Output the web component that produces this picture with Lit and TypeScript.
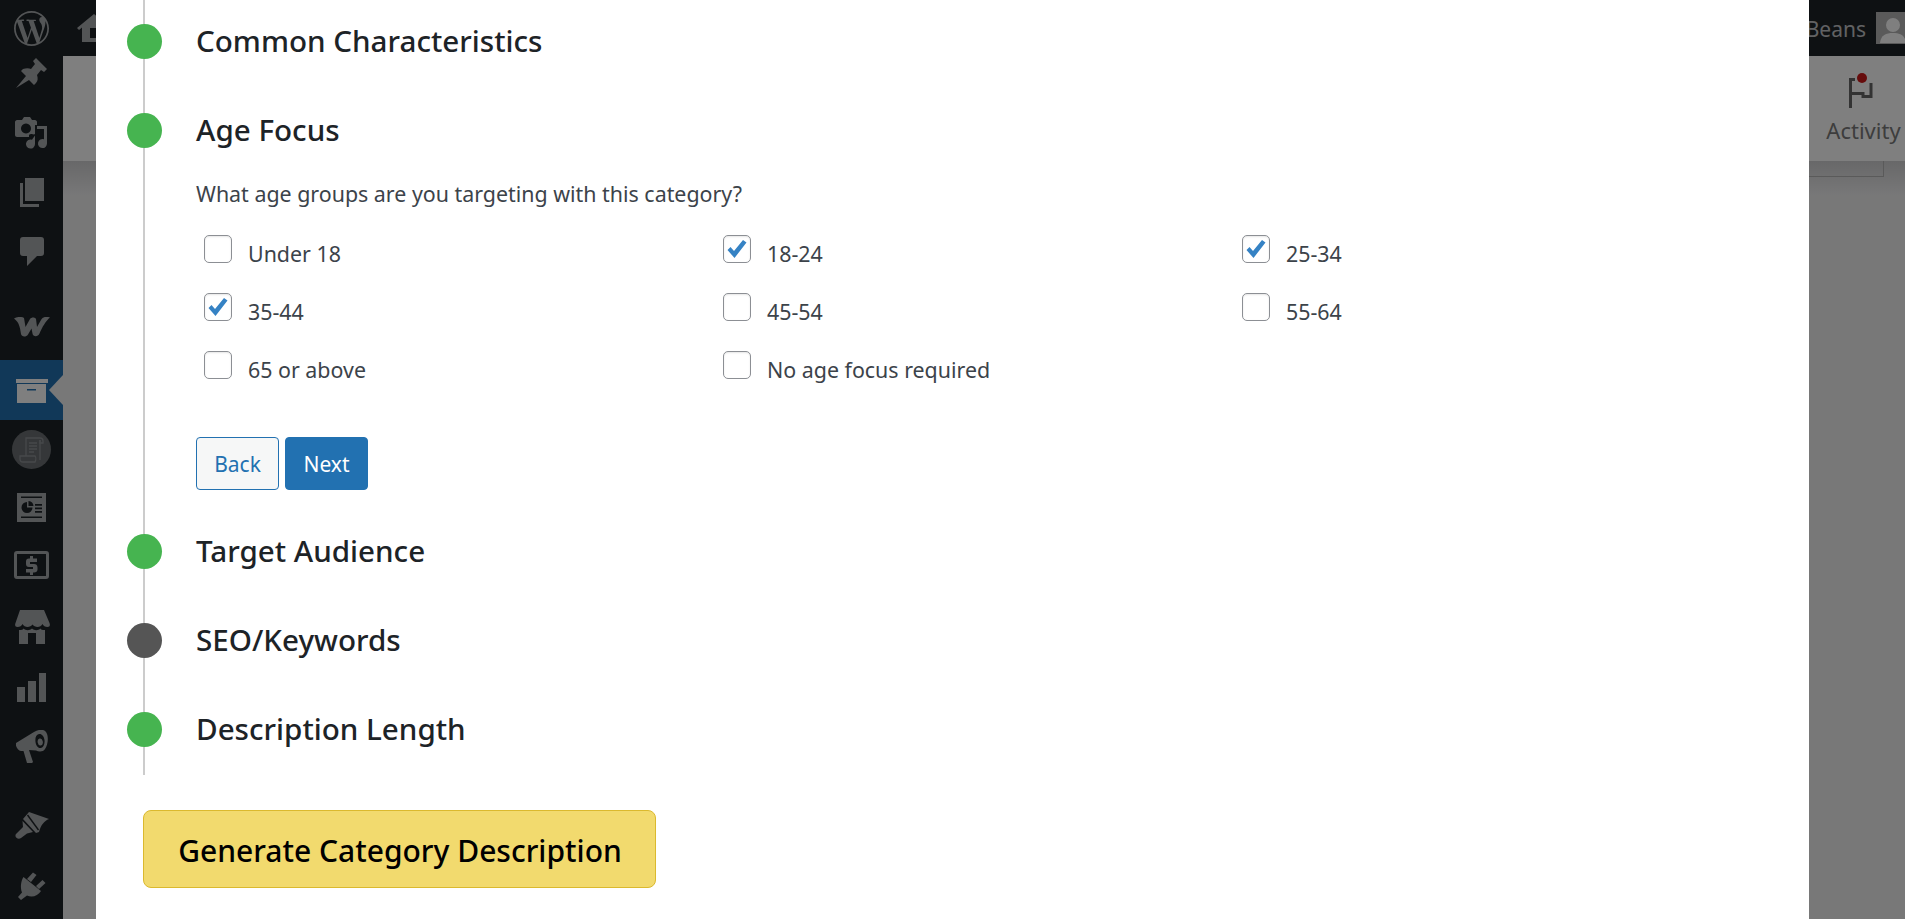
import { LitElement, html, css, svg } from "lit";
import { customElement } from "lit/decorators.js";

const side = (y: number, h: number, body: unknown, cls = "") => html`<div class="side-item ${cls}" style="height:${h}px;padding-top:${y}px">${body}</div>`;

const wp = svg`<path d="M21.469 6.825c.84 1.537 1.318 3.3 1.318 5.175 0 3.979-2.156 7.456-5.363 9.325l3.295-9.527c.615-1.54.82-2.771.82-3.864 0-.405-.026-.78-.07-1.11m-7.981.105c.647-.03 1.232-.105 1.232-.105.582-.075.514-.93-.067-.899 0 0-1.755.135-2.88.135-1.064 0-2.85-.15-2.85-.15-.585-.03-.661.855-.075.885 0 0 .54.061 1.125.09l1.68 4.605-2.37 7.08L5.354 6.9c.649-.03 1.234-.1 1.234-.1.585-.075.516-.93-.065-.896 0 0-1.746.138-2.874.138-.2 0-.438-.008-.69-.015C4.911 3.15 8.235 1.215 12 1.215c2.809 0 5.365 1.072 7.286 2.833-.046-.003-.091-.009-.141-.009-1.06 0-1.812.923-1.812 1.914 0 .89.513 1.643 1.06 2.531.411.72.89 1.643.89 2.977 0 .915-.354 1.994-.821 3.479l-1.075 3.585-3.9-11.61.001.014zM12 22.784c-1.059 0-2.081-.153-3.048-.437l3.237-9.406 3.315 9.087c.024.053.05.101.078.149-1.12.393-2.325.609-3.582.609M1.211 12c0-1.564.336-3.05.935-4.39L7.29 21.709C3.694 19.96 1.212 16.271 1.211 12M12 0C5.385 0 0 5.385 0 12s5.385 12 12 12 12-5.385 12-12S18.615 0 12 0"/>`;

const ico = (w: number, h: number, vb: string, body: unknown) => html`<svg class="ico" width=${w} height=${h} viewBox=${vb}>${body}</svg>`;
const DARK = "#1d2327";

const icons = {
  wp: ico(35, 35, "0 0 24 24", wp),
  pin: ico(31, 30, "0 0 31 30", svg`<path d="M0 30L10 18 5 13l2-2c3-1 6-1 8 0l4-5-2-3 3-3 11 11-3 3-3-2-4 5c1 3 1 6-1 8l-2 2-5-5z"/>`),
  media: ico(33, 32, "0 0 33 32", svg`<path fill-rule="evenodd" d="M2 3h5l2-3h6l2 3h3c1 0 2 1 2 2v3h-2v9l-1 .5c-2-1-4-.5-5 .5v2H2c-1 0-2-1-2-2V5c0-1 1-2 2-2zm9 3.500a5 5 0 1 0 .01 0z"/><path d="M22 9h10v17.500a4.500 4.500 0 1 1-3-4.200V12h-7z"/><path d="M20 18.500V27a4.500 4.500 0 1 1-3-4.200z"/>`),
  pages: ico(24, 29, "0 0 24 29", svg`<path d="M5 0h19v23H5z"/><path d="M0 5h3v21h16v3H0z"/>`),
  comments: ico(24, 29, "0 0 24 29", svg`<path d="M3 0h18c2 0 3 1 3 3v13c0 2-1 3-3 3h-4L7 29V19H3c-2 0-3-1-3-3V3c0-2 1-3 3-3z"/>`),
  woo: ico(36, 20, "0 0 36 20", svg`<path d="M0 1.500C3-.5 8-.5 10 1l1.500 9 4.500-8c1.500-2 5-2 6 0l1 8 4-7c1.500-3 5-4 9-2.500-4 3-8 10-10.500 16-1.500 3.500-6.500 3.500-7 0l-1-5-3.500 6c-2 3-6.500 2.500-7-.5C6 10 5 5 0 1.500z"/>`),
  archive: ico(32, 24, "0 0 32 24", svg`<path fill-rule="evenodd" d="M0 0h32v4H0zM1 5h29v19H1zm10 5v1.500h9V10z"/>`),
  scroll: html`<div class="scroll-badge"><svg width="28" height="28" viewBox="0 0 28 28" fill="none" stroke="#8d9195" stroke-width="1.300"><path d="M8 20V2h14c2 0 3 1 3 3v2h-3V4"/><path d="M22 4v20"/><path d="M11 7h8M11 10h8M11 13h8M11 16h5"/><path d="M2 20h15c1 1 1 4 0 6H5c-2 0-3-1-3-3z"/></svg></div>`,
  dash: ico(29, 29, "0 0 29 29", svg`<rect width="29" height="29"/><path d="M4 3.500h21V5H4zM4 23.500h21V25H4zM18 11h7v1.800h-7zM18 14.500h7v1.800h-7zM18 18h7v1.800h-7z" fill=${DARK}/><path d="M10 9a5.500 5.500 0 1 0 5.500 5.500H10z" fill=${DARK}/><path d="M11.500 8a5.500 5.500 0 0 1 5 5h-5z" fill=${DARK}/>`),
  money: ico(35, 28, "0 0 35 28", svg`<path fill-rule="evenodd" d="M3 0h29c2 0 3 1 3 3v22c0 2-1 3-3 3H3c-2 0-3-1-3-3V3c0-2 1-3 3-3zm0 3v22h29V3z"/><path d="M16 5h3v2.500h4V11h-7v2h4c2 0 3.500 1 3.500 3.500v2c0 2-1.500 3-3.500 3h-1V24h-3v-2.500h-4V18h7v-2h-4c-2 0-3-1-3-3v-2.500c0-2 1-3 3-3h1z"/>`),
  store: ico(36, 34, "0 0 36 34", svg`<path d="M6 0h24l5.500 13c1 2.500 0 4-2 4-2.500 0-4-1-5-3-1 2-3 3-5 3s-4-1-5-2.500c-1 1.500-3 2.500-5 2.500s-4-1-5-3c-1 2-2.500 3-5 3-2 0-3-1.500-2-4z"/><path d="M5 20c3 0 4-.5 4.500-1.500 2 2 6 2.500 8.500 0 2.500 2.500 6.500 2 8.500 0 .5 1 1.500 1.500 4.500 1.500v14h-9V23h-8v11H5z"/>`),
  chart: ico(29, 29, "0 0 29 29", svg`<path d="M0 14h8v15H0zM11 8h8v21h-8zM22 0h7v29h-7z"/>`),
  mega: ico(32, 33, "0 0 32 33", svg`<path fill-rule="evenodd" d="M0 13L18 2c5-3 10-3 12 0 3 4 2 13-1 17-2 3-6 3-9 1.500L13 20l4 12-1 1h-5l-3.500-12L5 21C2 20.500-1 16 0 13zM23 4c-3 .5-4 4-3.500 8 .5 4 3 6.500 5.500 6 2.500-.5 4-4 3.500-8-.5-4-3-6.500-5.500-6zm.5 4.500a2.500 3.500-8 1 1 1.500 7 2.500 3.500-8 1 1-1.500-7z"/>`),
  brush: ico(34, 27, "0 0 34 27", svg`<path d="M14 0l20 7c-5 2-8 6-10 13l-3 1L8 7z"/><path d="M12.500 3L23.500 18" stroke=${DARK} stroke-width="1.400" fill="none"/><path d="M7.500 9L18 20l-6 1.500-6 4.500c-3 2-7-1-5-4l7-7z"/>`),
  plug: ico(28, 28, "0 0 28 28", svg`<path d="M9 7l6-6.500 3.500 2.500-5.500 7zM18 14l6.500-6 3 3-6.500 6z"/><path d="M5.500 5L23 19c-3 5-9 7-14 4.500L3 28l-3-3 4-4.500C2 15 3 9 5.500 5z"/>`),
  home: ico(34, 28, "0 0 34 28", svg`<path fill-rule="evenodd" d="M17 0l17 14-2 2-3-2.500V28H5V13.500L2 16l-2-2zM13 14v10h8V14z"/>`),
  flag: html`<svg width="34" height="36" viewBox="0 0 34 36"><path d="M3.500 35V6.500H8M3.500 20.500H16v3h8V10" fill="none" stroke="#666" stroke-width="3"/><circle cx="15" cy="5" r="5" fill="#cc1818"/></svg>`,
};

const ages: [string, boolean][] = [
  ["Under 18", false], ["18-24", true], ["25-34", true],
  ["35-44", true], ["45-54", false], ["55-64", false],
  ["65 or above", false], ["No age focus required", false],
];

@customElement("app-root")
export class AppRoot extends LitElement {
  static styles = css`
    :host { display: block; width: 1905px; height: 919px; overflow: hidden; position: relative; font-family: "Noto Sans", sans-serif; background: #f0f0f1; }
    .admin { display: grid; grid-template-columns: 63px 1fr; grid-template-rows: 56px 105px 1fr; height: 919px; }
    .sidebar { grid-row: 1 / 4; background: #1d2327; display: flex; flex-direction: column; }
    .side-item { display: flex; justify-content: center; align-items: flex-start; box-sizing: border-box; color: #a7aaad; position: relative; flex: none; }
    .side-item .ico { fill: currentColor; }
    .side-item.active { background: #2271b1; color: #fff; }
    .side-item.active::after { content: ""; position: absolute; right: 0; top: 15px; border: 15px solid transparent; border-left: 0; border-right: 14px solid #f0f0f1; }
    .scroll-badge { width: 39px; height: 39px; border-radius: 50%; background: #6b6f72; display: flex; align-items: center; justify-content: center; }
    .topbar { background: #1d2327; display: flex; align-items: center; justify-content: space-between; color: #c3c4c7; padding-left: 14px; }
    .topbar .ico { fill: #a7aaad; }
    .user { display: flex; align-items: center; gap: 10px; font-size: 21px; margin-right: -5px; }
    .user span { padding-top: 2px; }
    .avatar { width: 32px; height: 30px; background: #b4b4b4; overflow: hidden; flex: none; border: 1px solid #b4b4b4; }
    .header { background: #fff; display: flex; justify-content: flex-end; }
    .activity { display: flex; flex-direction: column; align-items: center; color: #7a7a7a; font-size: 22px; width: 82px; padding-right: 1px; padding-top: 17px; line-height: 30px; box-sizing: border-box; }
    .activity span { margin-top: 6px; }
    .body { position: relative; background: linear-gradient(#d0d0d2 0, #f0f0f1 34px); }
    .card { position: absolute; right: 21px; top: 0; width: 120px; height: 15px; border: solid #b4b4b5; border-width: 0 1px 1px 0; }
    .overlay { position: absolute; inset: 0; background: rgba(0, 0, 0, .5); }
    .modal { position: absolute; left: 96px; top: 0; width: 1713px; height: 919px; background: #fff; overflow: hidden; color: #1d2327; }
    .timeline { margin-left: 47px; width: 1600px; border-left: 2px solid #ccc; padding: 24px 0 0 51px; box-sizing: border-box; }
    .step { padding-bottom: 54px; }
    .step.open { padding-bottom: 44px; }
    .step.last { padding-bottom: 28px; }
    .step-head { display: flex; align-items: center; height: 35px; gap: 34px; margin-left: -69px; }
    .dot { width: 35px; height: 35px; border-radius: 50%; background: #46b450; flex: none; }
    .dot.idle { background: #555; }
    h3 { margin: 0 0 3px; font-size: 29.6px; font-weight: 500; line-height: 35px; color: #1d2327; }
    .question { margin: 0; padding-top: 32px; font-size: 21.4px; line-height: 27px; color: #3c434a; }
    .grid { display: grid; grid-template-columns: repeat(3, 519px); grid-auto-rows: 58px; margin: 28px 0 0 8px; }
    .opt { display: flex; align-items: flex-start; font-size: 21.4px; color: #3c434a; }
    .box { width: 28px; height: 28px; box-sizing: border-box; border: 1px solid #8c8f94; border-radius: 5px; background: #fff; box-shadow: inset 0 1px 2px rgba(0,0,0,.1); display: flex; align-items: center; justify-content: center; flex: none; margin-right: 16px; }
    .opt-label { line-height: 27px; padding-top: 5px; }
    .actions { display: flex; gap: 6px; margin-top: 28px; }
    .btn { height: 53px; width: 83px; box-sizing: border-box; border: 1px solid #2271b1; border-radius: 4px; font: inherit; font-size: 21px; display: flex; align-items: center; justify-content: center; padding: 0; }
    .btn.back { background: #f6f7f7; color: #2271b1; }
    .btn.next { background: #2271b1; color: #fff; }
    .generate { display: flex; align-items: center; justify-content: center; margin: 35px 0 0 47px; width: 513px; height: 78px; box-sizing: border-box; background: #f2da6e; border: 1px solid #dbb92e; border-radius: 8px; font: inherit; font-size: 30px; font-weight: 500; color: #000; padding: 3px 0 0 1px; }
  `;

  render() {
    const step = (label: string, cls = "", dot = "") => html`<div class="step ${cls}"><div class="step-head"><span class="dot ${dot}"></span><h3>${label}</h3></div></div>`;
    return html`
      <div class="admin">
        <nav class="sidebar">
          ${side(11, 50, icons.wp)}
          ${side(8, 60, icons.pin)}
          ${side(7, 60, icons.media)}
          ${side(8, 60, icons.pages)}
          ${side(7, 70, icons.comments)}
          ${side(17, 60, icons.woo)}
          ${side(19, 60, icons.archive, "active")}
          ${side(10, 60, icons.scroll)}
          ${side(13, 60, icons.dash)}
          ${side(11, 60, icons.money)}
          ${side(10, 60, icons.store)}
          ${side(13, 60, icons.chart)}
          ${side(10, 80, icons.mega)}
          ${side(12, 60, icons.brush)}
          ${side(12, 59, icons.plug)}
        </nav>
        <div class="topbar">
          ${icons.home}
          <div class="user"><span>Beans</span><div class="avatar"><svg width="32" height="30" viewBox="0 0 32 30"><circle cx="16" cy="12" r="7" fill="#fff"/><path d="M3 30c1-8 6-10 13-10s12 2 13 10z" fill="#fff"/></svg></div></div>
        </div>
        <div class="header"><div class="activity">${icons.flag}<span>Activity</span></div></div>
        <div class="body"><div class="card"></div></div>
      </div>
      <div class="overlay"></div>
      <section class="modal">
        <div class="timeline">
          ${step("Common Characteristics")}
          <div class="step open">
            <div class="step-head"><span class="dot"></span><h3>Age Focus</h3></div>
            <p class="question">What age groups are you targeting with this category?</p>
            <div class="grid">
              ${ages.map(([l, c]) => html`<div class="opt"><span class="box">${c ? html`<svg width="22" height="20" viewBox="0 0 22 20"><path d="M1.500 11l3-3 3.500 4L17 1l3.500 2.500L8.500 19z" fill="#3582c4"/></svg>` : ""}</span><span class="opt-label">${l}</span></div>`)}
            </div>
            <div class="actions"><button class="btn back">Back</button><button class="btn next">Next</button></div>
          </div>
          ${step("Target Audience")}
          ${step("SEO/Keywords", "", "idle")}
          ${step("Description Length", "last")}
        </div>
        <button class="generate">Generate Category Description</button>
      </section>
    `;
  }
}
